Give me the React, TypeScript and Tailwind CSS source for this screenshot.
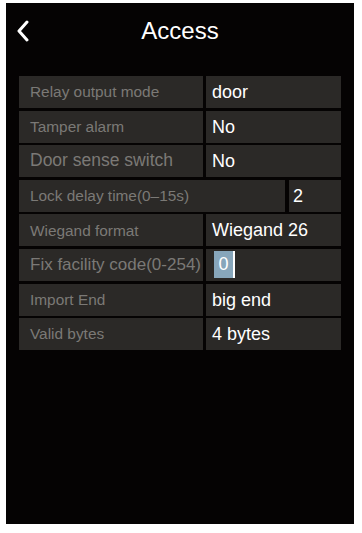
import React from 'react'

type Row = {
  label: string
  value: string
  labelSize?: string
  wide?: boolean
  selected?: boolean
}

const rows: Row[] = [
  { label: 'Relay output mode', value: 'door' },
  { label: 'Tamper alarm', value: 'No' },
  { label: 'Door sense switch', value: 'No', labelSize: 'text-[17.5px]' },
  { label: 'Lock delay time(0–15s)', value: '2', wide: true },
  { label: 'Wiegand format', value: 'Wiegand 26' },
  { label: 'Fix facility code(0-254)', value: '0', labelSize: 'text-[17px]', selected: true },
  { label: 'Import End', value: 'big end' },
  { label: 'Valid bytes', value: '4 bytes' },
]

function BackIcon() {
  return (
    <svg width="14" height="22" viewBox="0 0 14 22" fill="none">
      <polyline
        points="11,2 3,11 11,20"
        stroke="white"
        strokeWidth="3"
        strokeLinecap="round"
        strokeLinejoin="round"
      />
    </svg>
  )
}

function SettingRow({ row }: { row: Row }) {
  return (
    <div className={row.wide ? 'grid grid-cols-[266px_52px] gap-[4px] h-[32px]' : 'grid grid-cols-[184px_135px] gap-[3px] h-[32px]'}>
      <div className="bg-[#2b2927] flex items-center pl-[11px]">
        <span className={`${row.labelSize ?? 'text-[15.4px]'} text-[#7b7976] whitespace-nowrap leading-none`}>
          {row.label}
        </span>
      </div>
      <div className={`bg-[#2b2927] flex items-center ${row.wide ? 'pl-[4px]' : row.selected ? 'pl-[8px]' : 'pl-[6px]'}`}>
        {row.selected ? (
          <span className="h-[27px] w-[21px] bg-[#87a6bb] border-r-2 border-white text-white text-[18px] flex items-center justify-center">
            {row.value}
          </span>
        ) : (
          <span className="text-white text-[18px] leading-none whitespace-nowrap">{row.value}</span>
        )}
      </div>
    </div>
  )
}

export default function App() {
  return (
    <div className="w-[362px] h-[533px] bg-white pt-[3px] pl-[6px]" style={{ fontFamily: '"Liberation Sans", Arial, sans-serif' }}>
      <div className="w-[348px] h-[521px] bg-[#050303] flex flex-col">
        <div className="h-[56px] relative flex items-center justify-center">
          <div className="absolute left-[10px] top-[17px]">
            <BackIcon />
          </div>
          <span className="text-white text-[24px]">Access</span>
        </div>
        <div className="mt-[17px] px-[13px] flex flex-col gap-[2.6px]">
          {rows.map((row) => (
            <SettingRow key={row.label} row={row} />
          ))}
        </div>
      </div>
    </div>
  )
}
